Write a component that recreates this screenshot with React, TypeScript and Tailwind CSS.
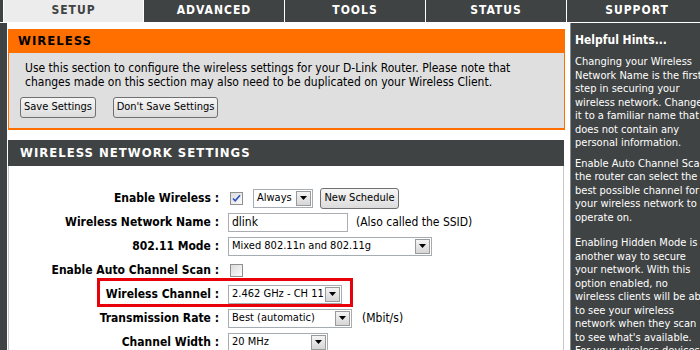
import React from "react";

const tabs = ["SETUP", "ADVANCED", "TOOLS", "STATUS", "SUPPORT"];

function Arrow() {
  return (
    <span className="flex h-[15px] w-[15px] shrink-0 items-center justify-center border border-[#9a9a9a] bg-gradient-to-b from-[#f4f4f4] to-[#d6d6d6]">
      <svg width="7" height="4" viewBox="0 0 7 4">
        <path d="M0 0h7L3.5 4z" fill="#000" />
      </svg>
    </span>
  );
}

function Select({ value, w }: { value: string; w: string }) {
  return (
    <div className={`flex h-[19px] items-center justify-between border border-[#a5acb2] bg-white pl-[3px] pr-[1px] text-[11px] ${w}`}>
      <span className="whitespace-nowrap">{value}</span>
      <Arrow />
    </div>
  );
}

function Check({ on }: { on?: boolean }) {
  return (
    <span className="ml-[2px] flex h-[13px] w-[13px] items-center justify-center border border-[#8f8f8f] bg-gradient-to-br from-[#dcdcdc] to-[#fbfbfb]">
      {on && (
        <svg width="9" height="9" viewBox="0 0 9 9">
          <path d="M1 4.5l2.2 2.3L8 1.2" stroke="#2a52be" strokeWidth="1.6" fill="none" />
        </svg>
      )}
    </span>
  );
}

function Btn({ children, w }: { children: React.ReactNode; w: string }) {
  return (
    <div className={`flex h-[21px] items-center justify-center whitespace-nowrap rounded-[3px] border border-[#707070] bg-gradient-to-b from-[#f6f6f6] to-[#dcdcdc] text-[11px] text-black ${w}`}>
      {children}
    </div>
  );
}

function Row({ label, children }: { label: string; children: React.ReactNode }) {
  return (
    <div className="flex h-[24px] items-center">
      <div className="w-[210px] whitespace-nowrap text-right text-[12px] font-bold">{label}</div>
      <div className="ml-[9px] flex items-center">{children}</div>
    </div>
  );
}

const hints = [
  ["Changing your Wireless", "Network Name is the first", "step in securing your", "wireless network. Change", "it to a familiar name that", "does not contain any", "personal information."],
  ["Enable Auto Channel Scan so", "the router can select the", "best possible channel for", "your wireless network to", "operate on."],
  ["Enabling Hidden Mode is", "another way to secure", "your network. With this", "option enabled, no", "wireless clients will be able", "to see your wireless", "network when they scan", "to see what's available.", "For your wireless devices"],
];

const gaps = ["mt-[8px]", "mt-[7px]", "mt-[12px]"];

export default function App() {
  return (
    <div className="h-[350px] w-[700px] overflow-hidden bg-white font-['Tahoma','DejaVu_Sans_Condensed','DejaVu_Sans',sans-serif] text-black">
      <div className="flex h-[23px] border-b border-white bg-[#404343] pl-[3px]">
        {tabs.map((t, i) => (
          <div
            key={t}
            className={`flex w-[141px] shrink-0 items-center justify-center border-r border-white pb-[2px] text-[12px] font-bold tracking-[1px] ${i === 0 ? "border-l bg-[#ececec] text-[#404343]" : "text-white"}`}
          >
            {t}
          </div>
        ))}
      </div>

      <div className="flex h-[327px]">
        <div className="w-[7px] shrink-0 bg-[#404343]" />

        <div className="w-[563px] shrink-0 pl-[1px] pt-[6px]">
          <div className="w-[557px]">
            <div className="flex h-[24px] items-center bg-[#ff6f00] pl-[10px] text-[13px] font-bold tracking-[1px]">WIRELESS</div>
            <div className="h-[77px] border-x border-b-2 border-[#ff6f00] bg-[#dfdfdf] pt-[8px]">
              <p className="pl-[16px] text-[12px] leading-[14px]">
                Use this section to configure the wireless settings for your D-Link Router. Please note that
                <br />
                changes made on this section may also need to be duplicated on your Wireless Client.
              </p>
              <div className="mt-[8px] flex gap-[17px] pl-[11px]">
                <Btn w="w-[76px]">Save Settings</Btn>
                <Btn w="w-[105px]">Don't Save Settings</Btn>
              </div>
            </div>
          </div>

          <div className="mt-[10px] w-[556px]">
            <div className="flex h-[26px] items-center bg-[#404343] pl-[12px] text-[13px] font-bold tracking-[1px] text-white">
              WIRELESS NETWORK SETTINGS
            </div>
            <div className="h-[200px] border-x border-[#c8c8c8] pt-[20px]">
              <Row label="Enable Wireless :">
                <Check on />
                <div className="ml-[10px]">
                  <Select value="Always" w="w-[60px]" />
                </div>
                <div className="ml-[7px]">
                  <Btn w="w-[79px]">New Schedule</Btn>
                </div>
              </Row>
              <Row label="Wireless Network Name :">
                <div className="flex h-[19px] w-[120px] items-center border border-[#abadb3] bg-white pl-[3px] text-[12px]">dlink</div>
                <span className="ml-[8px] whitespace-nowrap text-[12px]">(Also called the SSID)</span>
              </Row>
              <Row label="802.11 Mode :">
                <Select value="Mixed 802.11n and 802.11g" w="w-[204px]" />
              </Row>
              <Row label="Enable Auto Channel Scan :">
                <Check />
              </Row>
              <div className="relative">
                <Row label="Wireless Channel :">
                  <Select value="2.462 GHz - CH 11" w="w-[114px]" />
                </Row>
                <div className="absolute left-[88px] top-[-4px] h-[29px] w-[256px] border-[3px] border-[#e8000b]" />
              </div>
              <Row label="Transmission Rate :">
                <Select value="Best (automatic)" w="w-[124px]" />
                <span className="ml-[10px] text-[12px]">(Mbit/s)</span>
              </Row>
              <Row label="Channel Width :">
                <Select value="20 MHz" w="w-[100px]" />
              </Row>
            </div>
          </div>
        </div>

        <div className="w-[130px] shrink-0 overflow-hidden border-l border-[#8a8a8a] bg-[#404343] pl-[4px] pt-[10px] text-white">
          <div className="text-[12px] font-bold leading-[14px]">Helpful Hints...</div>
          {hints.map((p, i) => (
            <div key={i} className={`whitespace-nowrap text-[11px] leading-[13.5px] ${gaps[i]}`}>
              {p.map((l) => (
                <div key={l}>{l}</div>
              ))}
            </div>
          ))}
        </div>
      </div>
    </div>
  );
}
